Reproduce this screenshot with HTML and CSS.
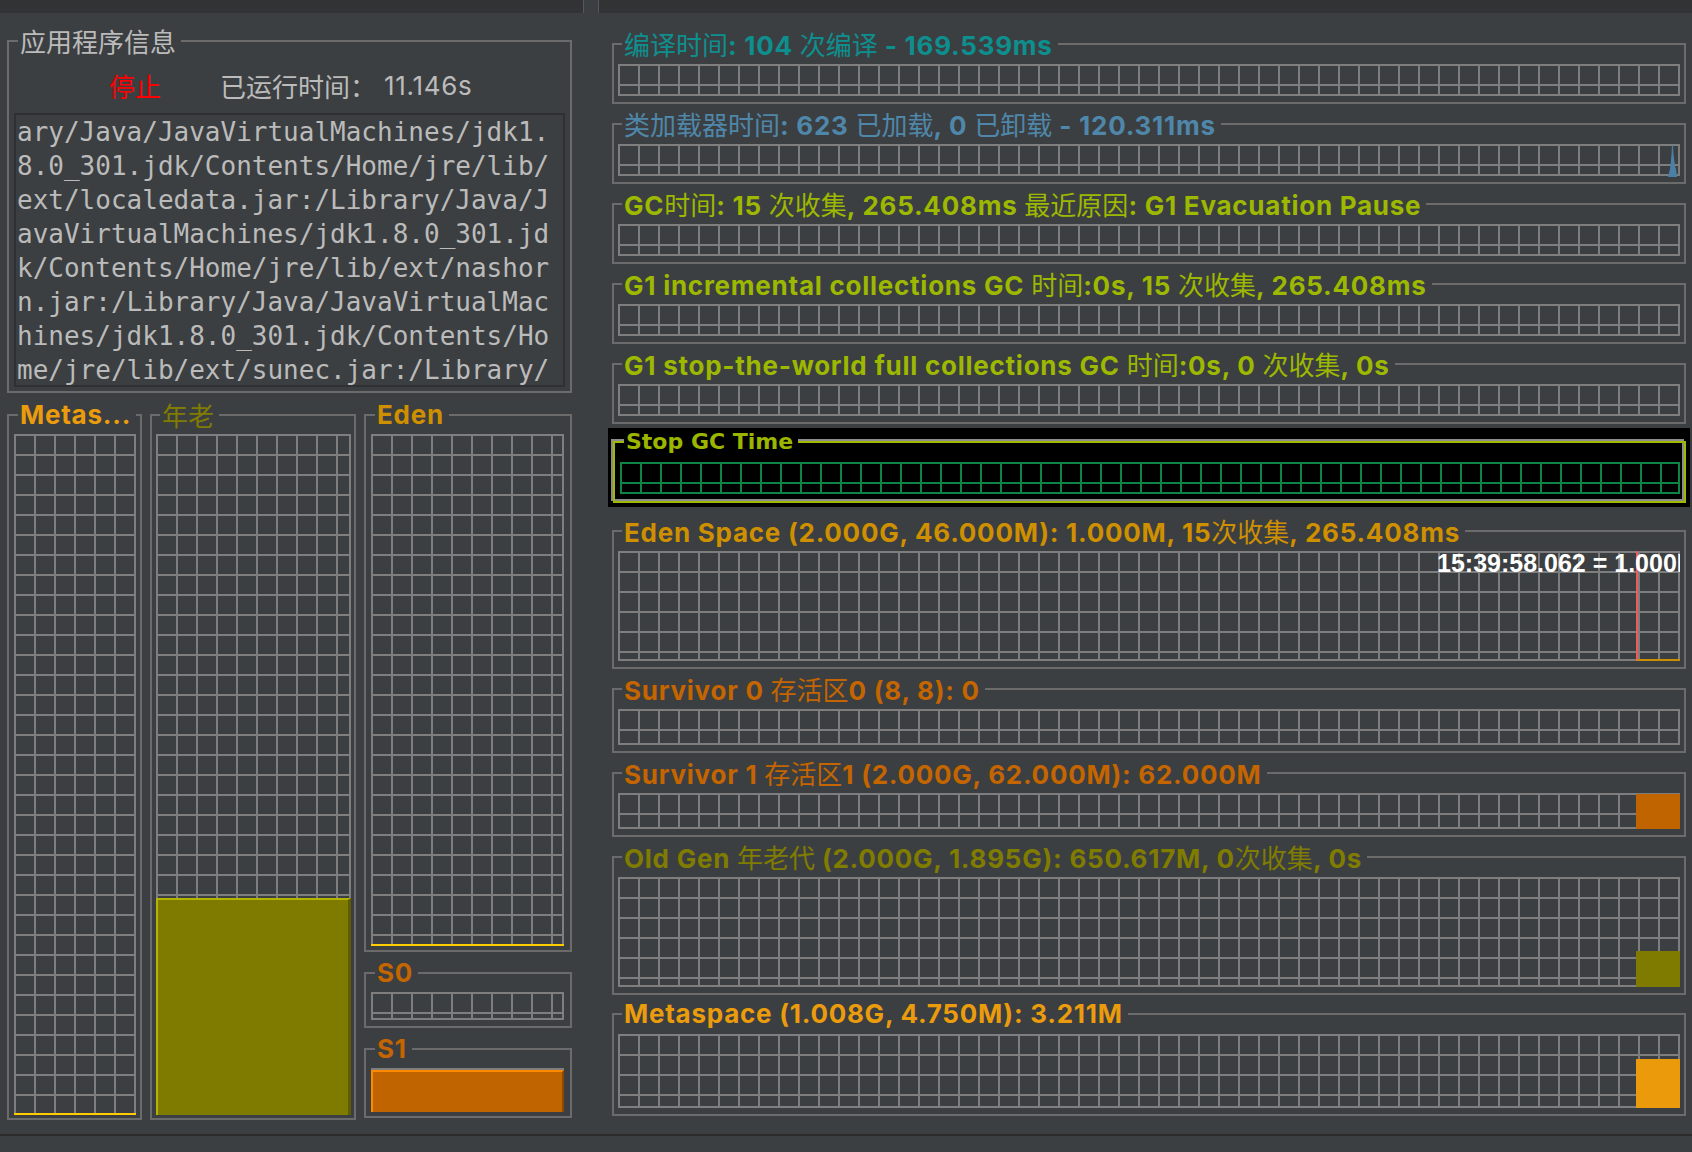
FILE: index.html
```html
<!DOCTYPE html>
<html lang="zh-CN">
<head>
<meta charset="utf-8">
<title>Visual GC</title>
<link rel="stylesheet" href="styles.css">
</head>
<body>
<div class="topbar"><div class="topbar-seg topbar-left"></div><div class="topbar-seg topbar-right"></div></div>
<div class="main">
  <div class="left-col">
    <fieldset class="tb info">
      <legend class="lg-info">应用程序信息</legend>
      <div class="status"><span class="stop">停止</span><span class="uptime-l">已运行时间：</span><span class="uptime-v">11.146s</span></div>
      <pre class="cp">ary/Java/JavaVirtualMachines/jdk1.
8.0_301.jdk/Contents/Home/jre/lib/
ext/localedata.jar:/Library/Java/J
avaVirtualMachines/jdk1.8.0_301.jd
k/Contents/Home/jre/lib/ext/nashor
n.jar:/Library/Java/JavaVirtualMac
hines/jdk1.8.0_301.jdk/Contents/Ho
me/jre/lib/ext/sunec.jar:/Library/</pre>
    </fieldset>
    <div class="spaces">
      <fieldset class="tb col-meta">
        <legend class="c-meta">Metas...</legend>
        <div class="grid g-tall"><div class="lvl-line"></div></div>
      </fieldset>
      <fieldset class="tb col-old">
        <legend class="c-old lg-cj">年老</legend>
        <div class="grid g-tall"><div class="fill-old"></div></div>
      </fieldset>
      <div class="young">
        <fieldset class="tb col-y">
          <legend class="c-eden">Eden</legend>
          <div class="grid g-eden"><div class="lvl-line"></div></div>
        </fieldset>
        <fieldset class="tb col-y col-s0">
          <legend class="c-surv">S0</legend>
          <div class="grid g-s0"></div>
        </fieldset>
        <fieldset class="tb col-y col-s1">
          <legend class="c-surv">S1</legend>
          <div class="grid g-s1"><div class="fill-s1"></div></div>
        </fieldset>
      </div>
    </div>
  </div>

  <div class="right-col">
    <fieldset class="tb gr">
      <legend class="c-cyan"><span class="cj">编译时间</span>: 104 <span class="cj">次编译</span> - 169.539ms</legend>
      <div class="grid h32"></div>
    </fieldset>
    <fieldset class="tb gr">
      <legend class="c-steel"><span class="cj">类加载器时间</span>: 623 <span class="cj">已加载</span>, 0 <span class="cj">已卸载</span> - 120.311ms</legend>
      <div class="grid h32">
        <svg class="spike" width="10" height="32" viewBox="0 0 10 32"><path d="M0 32 L2 24 L2.5 21 L3.5 9 L4 0 L5 0 L5.5 9 L7 21 L8 24 L9 32 Z" fill="#4a80a8"/></svg>
      </div>
    </fieldset>
    <fieldset class="tb gr">
      <legend class="c-yg">GC<span class="cj">时间</span>: 15 <span class="cj">次收集</span>, 265.408ms <span class="cj">最近原因</span>: G1 Evacuation Pause</legend>
      <div class="grid h32"></div>
    </fieldset>
    <fieldset class="tb gr">
      <legend class="c-yg">G1 incremental collections GC <span class="cj">时间</span>:0s, 15 <span class="cj">次收集</span>, 265.408ms</legend>
      <div class="grid h32"></div>
    </fieldset>
    <fieldset class="tb gr">
      <legend class="c-yg">G1 stop-the-world full collections GC <span class="cj">时间</span>:0s, 0 <span class="cj">次收集</span>, 0s</legend>
      <div class="grid h32"></div>
    </fieldset>
    <div class="sel">
      <fieldset class="tb stopgc">
        <legend>Stop GC Time</legend>
        <div class="grid h32 green"></div>
      </fieldset>
    </div>
    <fieldset class="tb gr gr-eden">
      <legend class="c-eden">Eden Space (2.000G, 46.000M): 1.000M, 15<span class="cj">次收集</span>, 265.408ms</legend>
      <div class="grid h110 clip">
        <span class="tip">15:39:58.062 = 1.000M</span>
        <div class="edenmark"></div>
      </div>
    </fieldset>
    <fieldset class="tb gr gr-low">
      <legend class="c-surv">Survivor 0 <span class="cj">存活区</span>0 (8, 8): 0</legend>
      <div class="grid h36"></div>
    </fieldset>
    <fieldset class="tb gr gr-low">
      <legend class="c-surv">Survivor 1 <span class="cj">存活区</span>1 (2.000G, 62.000M): 62.000M</legend>
      <div class="grid h36"><div class="blk blk-s1"></div></div>
    </fieldset>
    <fieldset class="tb gr gr-low">
      <legend class="c-old">Old Gen <span class="cj">年老代</span> (2.000G, 1.895G): 650.617M, 0<span class="cj">次收集</span>, 0s</legend>
      <div class="grid h110"><div class="blk blk-old"></div></div>
    </fieldset>
    <fieldset class="tb gr gr-low gr-last">
      <legend class="c-meta">Metaspace (1.008G, 4.750M): 3.211M</legend>
      <div class="grid h74"><div class="blk blk-meta"></div></div>
    </fieldset>
  </div>
</div>
<div class="footer"></div>
</body>
</html>
```
FILE: styles.css
```css
* { box-sizing: border-box; }
html, body { margin: 0; padding: 0; }
body {
  width: 1692px;
  height: 1152px;
  overflow: hidden;
  background: #3c3f41;
  color: #bbbbbb;
  font-family: Inter, "Noto Sans CJK SC", sans-serif;
}

/* top strip */
.topbar { display: flex; height: 13px; }
.topbar-seg { background: #313335; }
.topbar-left { width: 584px; border-right: 1px solid #55585a; }
.topbar-right { flex: 1; margin-left: 14px; border-left: 1px solid #55585a; }

.main { display: flex; align-items: flex-start; height: 1121px; }
.footer { height: 18px; border-top: 2px solid #2b2b2b; }

.left-col { width: 565px; margin-left: 7px; margin-top: 13px; }
.right-col { width: 1074px; margin-left: 40px; margin-top: 16px; display: flex; flex-direction: column; }

/* titled borders */
.tb {
  margin: 0;
  min-width: 0;
  border: 2px solid #6b6b6b;
  padding: 5px 4px 6px 4px;
}
.tb > legend {
  margin-left: 4px;
  padding: 0 5px 0 2px;
  height: 30px;
  line-height: 30px;
  font-size: 26px;
  font-weight: 700;
  letter-spacing: 0.75px;
  white-space: nowrap;
}
.cj { font-family: "Noto Sans CJK SC", sans-serif; font-weight: 400; letter-spacing: 0; }

.c-cyan { color: #0e8f8f; }
.c-steel { color: #4f87aa; }
.c-yg { color: #9db800; }
.c-eden { color: #cf9000; }
.c-surv { color: #c46500; }
.c-old { color: #807c00; }
.c-meta { color: #eb9c0c; }

/* info box */
.info { padding: 0 5px 4px 5px; }
.tb > legend.lg-info {
  color: #bbbbbb;
  font-family: "Noto Sans CJK SC", sans-serif;
  font-weight: 400;
  letter-spacing: 0;
}
.status {
  display: flex;
  height: 57px;
  padding-top: 3px;
  line-height: 54px;
  font-size: 26px;
  font-family: "Noto Sans CJK SC", sans-serif;
  white-space: nowrap;
}
.stop { color: #ff0000; margin-left: 95px; }
.uptime-l { margin-left: 59px; color: #bbbbbb; }
.uptime-v { margin-left: 8px; font-family: Inter, sans-serif; letter-spacing: 0.7px; color: #bbbbbb; }
.cp {
  margin: 0;
  height: 274px;
  overflow: hidden;
  border: 2px solid #2e3032;
  padding: 0 0 0 1px;
  font-family: "DejaVu Sans Mono", monospace;
  font-size: 26px;
  line-height: 34px;
  color: #bbbbbb;
  white-space: pre;
}

/* lower-left columns */
.spaces { display: flex; gap: 8px; margin-top: 7px; align-items: flex-start; }
.col-meta { width: 135px; padding: 4px 4px 3px 5px; }
.col-old { width: 206px; padding: 4px 3px 3px 4px; }
.young { width: 208px; display: flex; flex-direction: column; }
.col-y { padding: 4px 6px 4px 5px; }
.col-s0 { margin-top: 6px; padding-bottom: 6px; }
.col-s1 { margin-top: 6px; }
.tb > legend.lg-cj { font-family: "Noto Sans CJK SC", sans-serif; font-weight: 400; letter-spacing: 0; }

/* grids */
.grid {
  --gl: #7e7e7e;
  position: relative;
  display: flex;
  flex-direction: column;
  justify-content: flex-end;
  align-items: flex-end;
  background-image:
    linear-gradient(to left, var(--gl) 2px, transparent 2px),
    linear-gradient(to top, var(--gl) 2px, transparent 2px),
    linear-gradient(to right, var(--gl) 2px, transparent 2px),
    linear-gradient(to bottom, var(--gl) 2px, transparent 2px);
  background-size: 100% 100%, 100% 100%, 20px 20px, 20px 20px;
  background-repeat: no-repeat, no-repeat, repeat, repeat;
}
.grid.green { --gl: #0d8444; }
.g-tall { height: 681px; }
.g-eden { height: 512px; }
.g-s0 { height: 28px; }
.g-s1 { height: 44px; }
.h32 { height: 32px; }
.h36 { height: 36px; }
.h74 { height: 74px; }
.h110 { height: 110px; }
.clip { overflow: hidden; }

.lvl-line { align-self: stretch; height: 2px; background: #ffcc00; }
.fill-old {
  align-self: stretch;
  height: 217px;
  background: #7f7a00;
  border-top: 2px solid #b4b400;
  border-left: 2px solid #b4b400;
  border-right: 3px solid #5e5b00;
}
.fill-s1 {
  align-self: stretch;
  height: 42px;
  background: #c06400;
  border-top: 2px solid #ff8a00;
  border-left: 2px solid #ff8a00;
  border-right: 2px solid #8c4a00;
}

/* right charts */
.gr + .gr { margin-top: 5px; }
.gr.gr-eden { margin-top: 9px; }
.gr.gr-low { margin-top: 5px; }
.gr.gr-last { margin-top: 4px; }
.spike { position: absolute; left: 1050px; top: 1px; }

.sel { background: #000; margin: 4px -4px 0; padding: 1px 4px 4px 5px; }
.stopgc {
  border: 2px solid #a2b800;
  padding: 7px 4px 7px 5px;
  box-shadow: -2px -2px 0 #8c8c8c, inset -2px -2px 0 #8c8c8c;
}
.stopgc > legend {
  height: 26px;
  line-height: 26px;
  font-family: "DejaVu Sans", sans-serif;
  font-size: 22px;
  letter-spacing: 0;
  color: #9cb600;
  background: #000;
}

.tip {
  position: absolute;
  left: 819px;
  top: 0;
  font-family: "Liberation Sans", Arial, sans-serif;
  font-weight: 700;
  font-size: 25px;
  line-height: 25px;
  color: #ffffff;
  white-space: nowrap;
}
.edenmark {
  width: 44px;
  height: 100%;
  border-left: 2px solid #ec5c5c;
  border-bottom: 2px solid #cc8f00;
}
.blk { width: 44px; }
.blk-s1 { height: 35px; background: #c06400; }
.blk-old { height: 36px; background: #7f7a00; }
.blk-meta { height: 49px; background: #ea9a0b; }
```
